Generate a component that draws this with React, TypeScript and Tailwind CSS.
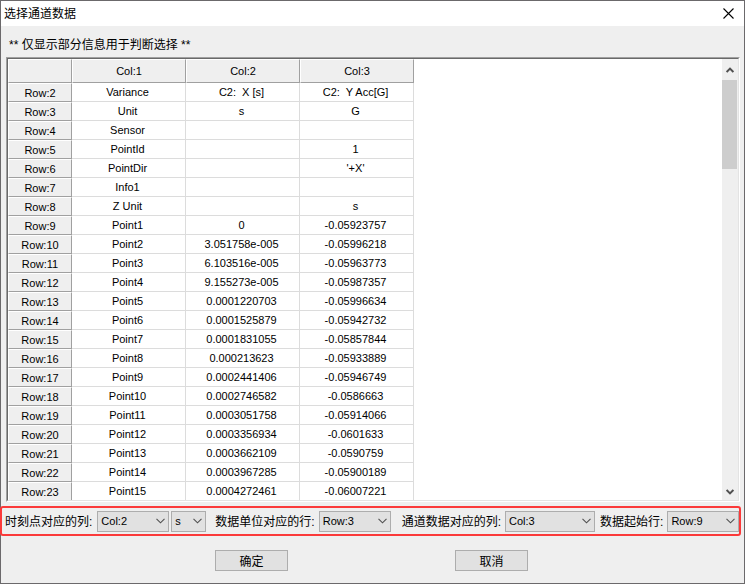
const columns = ["Col:1", "Col:2", "Col:3"];

const rows = [
  ["Variance", "C2:  X [s]", "C2:  Y Acc[G]"],
  ["Unit", "s", "G"],
  ["Sensor", "", ""],
  ["PointId", "", "1"],
  ["PointDir", "", "'+X'"],
  ["Info1", "", ""],
  ["Z Unit", "", "s"],
  ["Point1", "0", "-0.05923757"],
  ["Point2", "3.051758e-005", "-0.05996218"],
  ["Point3", "6.103516e-005", "-0.05963773"],
  ["Point4", "9.155273e-005", "-0.05987357"],
  ["Point5", "0.0001220703", "-0.05996634"],
  ["Point6", "0.0001525879", "-0.05942732"],
  ["Point7", "0.0001831055", "-0.05857844"],
  ["Point8", "0.000213623", "-0.05933889"],
  ["Point9", "0.0002441406", "-0.05946749"],
  ["Point10", "0.0002746582", "-0.0586663"],
  ["Point11", "0.0003051758", "-0.05914066"],
  ["Point12", "0.0003356934", "-0.0601633"],
  ["Point13", "0.0003662109", "-0.0590759"],
  ["Point14", "0.0003967285", "-0.05900189"],
  ["Point15", "0.0004272461", "-0.06007221"],
];

type PickerProps = {
  id: string;
  value: string;
  options: string[];
  width: string;
  label?: string;
};

function Picker({ id, value, options, width, label }: PickerProps) {
  return (
    <div className={`grid shrink-0 items-center ${width}`}>
      <select
        id={id}
        aria-label={label}
        defaultValue={value}
        className="col-start-1 row-start-1 h-[21px] w-full appearance-none border border-[#adadad] bg-[#e1e1e1] pl-[3px] text-[11px] leading-4 text-black outline-none"
      >
        {options.map((o) => (
          <option key={o}>{o}</option>
        ))}
      </select>
      <svg
        viewBox="0 0 9 6"
        className="pointer-events-none col-start-1 row-start-1 mr-1 h-[6px] w-[9px] justify-self-end"
        fill="none"
        stroke="#505050"
        strokeWidth="1.1"
      >
        <path d="M.5 .8 4.5 4.8 8.5 .8" />
      </svg>
    </div>
  );
}

/* Read-only preview of the imported sheet */
function DataGrid() {
  return (
    <div className="mr-1 ml-[5px] flex border border-t-[#a0a0a0] border-r-white border-b-white border-l-[#a0a0a0]">
      <div className="flex grow border border-t-[#696969] border-r-[#e3e3e3] border-b-[#e3e3e3] border-l-[#696969] bg-white">
        <div className="grow">
          <table className="w-[406px] table-fixed border-separate border-spacing-0 text-center text-[11px] leading-[16px]">
            <colgroup>
              <col className="w-[64px]" />
              <col />
              <col />
              <col />
            </colgroup>
            <thead>
              <tr>
                <td className="h-6 border border-t-white border-r-[#a0a0a0] border-b-[#a0a0a0] border-l-white bg-[#efefef] p-0" />
                {columns.map((c) => (
                  <th
                    key={c}
                    scope="col"
                    className="h-6 border border-t-white border-r-[#a0a0a0] border-b-[#a0a0a0] border-l-white bg-[#efefef] p-0 font-normal"
                  >
                    {c}
                  </th>
                ))}
              </tr>
            </thead>
            <tbody>
              {rows.map((cells, i) => (
                <tr key={i} className="group">
                  <th
                    scope="row"
                    className="h-[19px] border border-t-white border-r-[#a0a0a0] border-b-[#a0a0a0] border-l-white bg-[#efefef] p-0 font-normal group-last:h-[18px] group-last:border-b-0"
                  >
                    Row:{i + 2}
                  </th>
                  {cells.map((text, j) => (
                    <td
                      key={j}
                      className="h-[19px] border-r border-b border-[#dcdcdc] p-0 pr-[2px] whitespace-pre group-last:h-[18px] group-last:border-b-0"
                    >
                      {text}
                    </td>
                  ))}
                </tr>
              ))}
            </tbody>
          </table>
        </div>

        {/* Scrollbar */}
        <div className="flex w-4 flex-col bg-[#efefef]">
          <button type="button" aria-label="Scroll up" className="flex h-[21px] items-center justify-center">
            <svg viewBox="0 0 8 6" className="h-[6px] w-2" fill="none" stroke="#505050" strokeWidth="2">
              <path d="M.6 5 4 1.6 7.4 5" />
            </svg>
          </button>
          <div className="mr-px h-[89px] bg-[#cdcdcd]" />
          <div className="grow" />
          <button type="button" aria-label="Scroll down" className="flex h-[17px] items-center justify-center">
            <svg viewBox="0 0 8 6" className="h-[6px] w-2" fill="none" stroke="#505050" strokeWidth="2">
              <path d="M.6 1 4 4.4 7.4 1" />
            </svg>
          </button>
        </div>
      </div>
    </div>
  );
}

function App() {
  return (
    <div className="border border-[#6b696b] bg-[#efefef] font-['Liberation_Sans','Noto_Sans_CJK_SC',sans-serif] text-[12px] leading-4 text-black">
      <header className="flex h-[25px] items-center justify-between bg-white pr-[10px] pl-[3px]">
        <h1>选择通道数据</h1>
        <button type="button" aria-label="关闭">
          <svg viewBox="0 0 11 11" className="h-[11px] w-[11px]" fill="none" stroke="#000" strokeWidth="1.1">
            <path d="M.5 .5 10.5 10.5M10.5 .5 .5 10.5" />
          </svg>
        </button>
      </header>

      <p className="px-2 pt-[11px] pb-1">** 仅显示部分信息用于判断选择 **</p>

      <DataGrid />

      {/* Column and row mapping */}
      <div className="-ml-px mt-1 mr-[3px] flex h-[30px] items-center rounded-[3px] border-2 border-[#fb3a3a] pl-[3px] whitespace-nowrap">
        <div className="flex items-center gap-[5px]">
          <label htmlFor="timeCol" className="pt-[2px]">时刻点对应的列:</label>
          <Picker id="timeCol" value="Col:2" options={columns} width="w-[72px]" />
        </div>
        <div className="ml-[2px]">
          <Picker id="timeUnit" label="时间单位" value="s" options={["s", "ms"]} width="w-[35px]" />
        </div>
        <div className="ml-[9px] flex items-center gap-1">
          <label htmlFor="unitRow" className="pt-[2px]">数据单位对应的行:</label>
          <Picker id="unitRow" value="Row:3" options={["Row:2", "Row:3", "Row:4"]} width="w-[72px]" />
        </div>
        <div className="ml-[11px] flex items-center gap-1">
          <label htmlFor="dataCol" className="pt-[2px]">通道数据对应的列:</label>
          <Picker id="dataCol" value="Col:3" options={columns} width="w-[90px]" />
        </div>
        <div className="ml-[5px] flex items-center gap-1">
          <label htmlFor="startRow" className="pt-[2px]">数据起始行:</label>
          <Picker id="startRow" value="Row:9" options={["Row:8", "Row:9", "Row:10"]} width="w-[72px]" />
        </div>
      </div>

      <footer className="flex justify-center gap-[167px] pt-[14px] pr-[2px] pb-3">
        <button type="submit" className="h-[21px] w-[73px] border border-[#adadad] bg-[#e1e1e1] pt-[2px]">
          确定
        </button>
        <button type="button" className="h-[21px] w-[73px] border border-[#adadad] bg-[#e1e1e1] pt-[2px]">
          取消
        </button>
      </footer>
    </div>
  );
}

export default App;
